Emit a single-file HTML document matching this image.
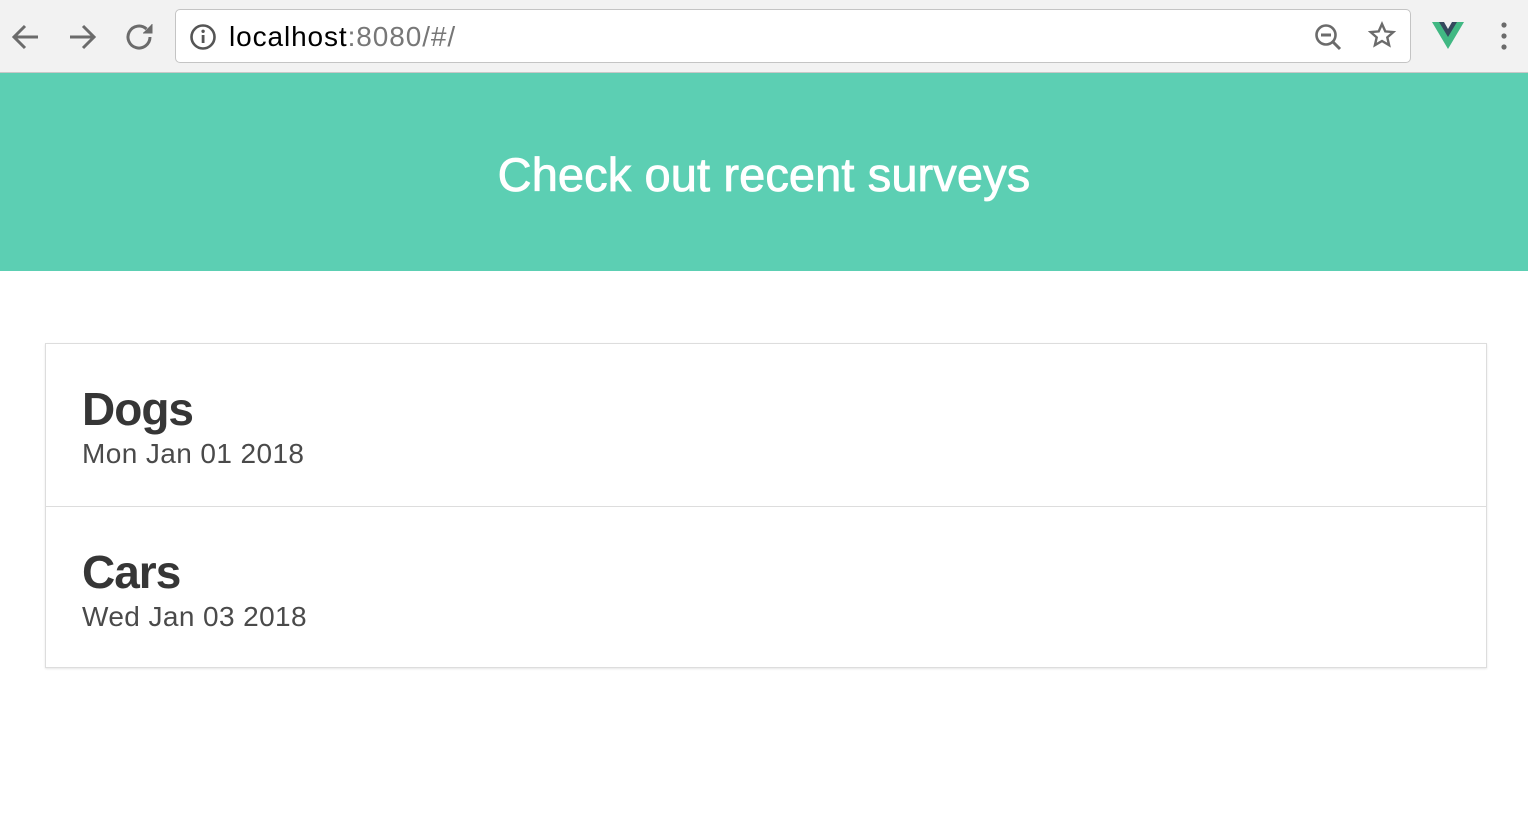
<!DOCTYPE html>
<html><head><style>
body{margin:0;width:1528px;height:834px;background:#fff;font-family:"Liberation Sans",sans-serif;position:relative;overflow:hidden}
.bar{position:absolute;left:0;top:0;width:1528px;height:72px;background:#f2f2f2;border-bottom:1px solid #c8c8c8}
.url{position:absolute;left:175px;top:9px;width:1236px;height:54px;background:#fff;border:1px solid #c4c4c4;border-radius:5px;box-sizing:border-box}
.url span{position:absolute;left:53px;top:11px;font-size:28px;color:#000;letter-spacing:0.9px}
.hero{position:absolute;left:0;top:73px;width:1528px;height:198px;background:#5ccfb3}
.hero h1{margin:0;position:absolute;width:100%;top:74px;text-align:center;color:#fff;font-size:47px;font-weight:normal;letter-spacing:0.1px;-webkit-text-stroke:0.8px #fff}
.card{position:absolute;left:45px;top:343px;width:1442px;height:325px;border:1px solid #ddd;box-sizing:border-box;box-shadow:0 1px 2px rgba(0,0,0,.1)}
.item{height:162px;position:relative;box-sizing:border-box}
.item+.item{border-top:1px solid #ddd}
.t{position:absolute;left:36px;top:38px;font-size:46px;font-weight:bold;color:#363636;letter-spacing:-1px}
.d{position:absolute;left:36px;top:94px;font-size:28px;color:#4a4a4a;letter-spacing:0.4px}
</style></head><body>
<div class="bar">
<div class="url">
<svg width="30" height="30" style="position:absolute;left:12px;top:12px"><circle cx="15" cy="15" r="11.5" fill="none" stroke="#555" stroke-width="2.6"/><rect x="13.7" y="13" width="2.8" height="8" fill="#555"/><circle cx="15.1" cy="9.3" r="1.7" fill="#555"/></svg>
<span>localhost<span style="position:static;color:#777">:8080/#/</span></span>
</div>
<svg width="1528" height="72" style="position:absolute;left:0;top:0" fill="none" stroke="#6b6b6b" stroke-width="3">
<path d="M38 37H14M25 26L14 37L25 48"/>
<path d="M70 37H94M83 26L94 37L83 48"/>
<path d="M150 37a11 11 0 1 1-3.5-8"/><path d="M152 24v9h-9" fill="#6b6b6b" stroke-width="1"/>
<circle cx="1326" cy="35" r="9.5" stroke-width="2.6"/><path d="M1321 35h10M1333 42l7 7"/>
<path d="M1382 24l3.3 7.4 8 .7-6 5.3 1.8 7.8-7.1-4.2-7.1 4.2 1.8-7.8-6-5.3 8-.7z" stroke-width="2.4"/>
<circle cx="1504" cy="25" r="2.6" fill="#6b6b6b" stroke="none"/><circle cx="1504" cy="36" r="2.6" fill="#6b6b6b" stroke="none"/><circle cx="1504" cy="47" r="2.6" fill="#6b6b6b" stroke="none"/>
<path d="M1432 22h9l7 12 7-12h9l-16 27z" fill="#41b883" stroke="none"/>
<path d="M1439 22h5l4 7 4-7h5l-9 15z" fill="#35495e" stroke="none"/>
</svg>
</div>
<div class="hero"><h1>Check out recent surveys</h1></div>
<div class="card">
<div class="item"><div class="t">Dogs</div><div class="d">Mon Jan 01 2018</div></div>
<div class="item"><div class="t">Cars</div><div class="d">Wed Jan 03 2018</div></div>
</div>
</body></html>
